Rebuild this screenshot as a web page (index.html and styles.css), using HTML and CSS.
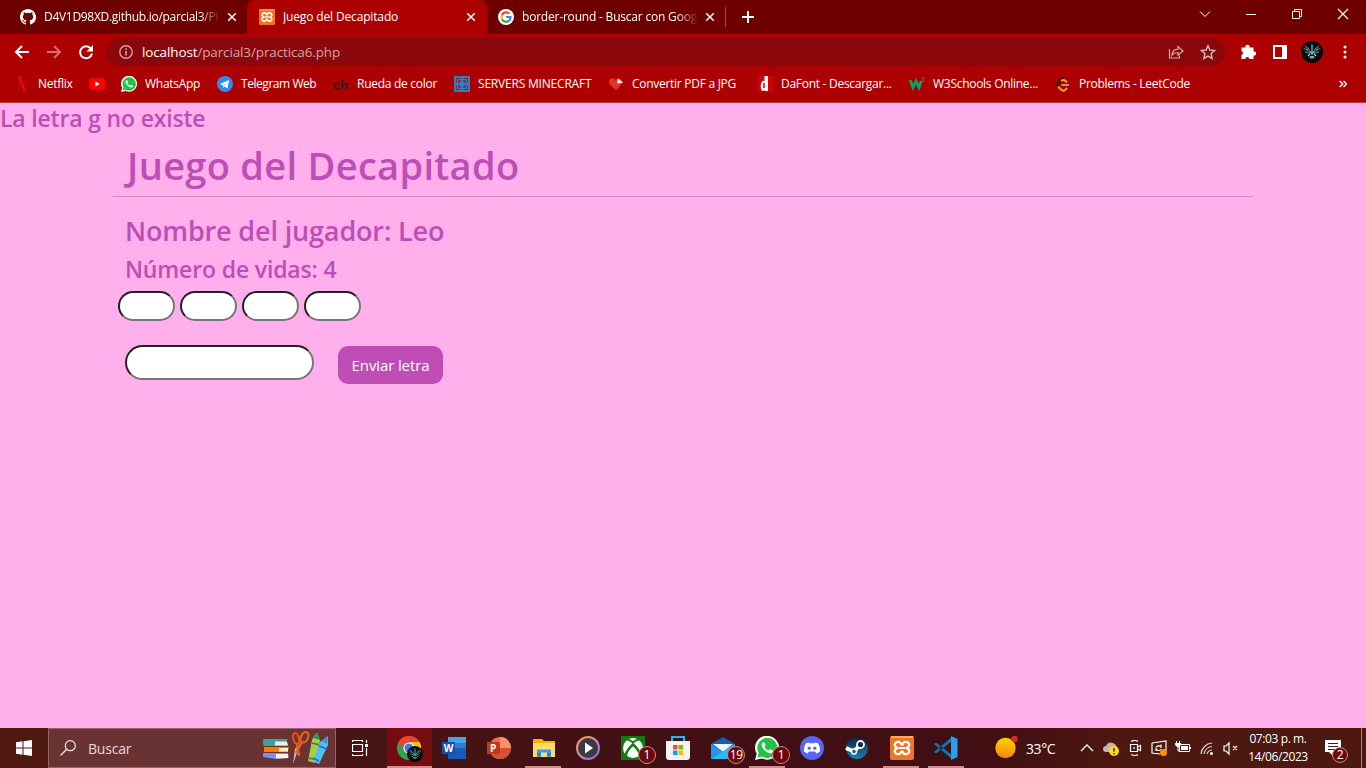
FILE: index.html
```html
<!DOCTYPE html>
<html lang="es">
<head>
<meta charset="utf-8">
<title>Juego del Decapitado</title>
<link rel="stylesheet" href="styles.css">
</head>
<body>
<svg class="defs" width="0" height="0">
  <symbol id="whatsapp" viewBox="0 0 24 24"><path d="M0 24l1.700-6.200A12 12 0 1 1 6.800 22.500z" fill="#fff"/><path d="M2.500 21.500l1.200-4.500A10 10 0 1 1 7.200 20.500z" fill="#25c048"/><path d="M8 6.500c-2 1-1.800 4 1 7s6.500 5 8.600 2.800c.7-.9.5-1.600-.2-2l-2-1c-.8-.3-1 1.200-1.800 1.200-1.200 0-4-2.700-4-3.600 0-.6 1-1 .8-1.800l-.8-2c-.3-.8-1-.8-1.600-.6z" fill="#fff"/></symbol>
  <symbol id="xampp" viewBox="0 0 24 24"><rect width="24" height="24" rx="2" fill="#ee7623"/><rect x="1" y="0" width="22" height="2" fill="#f6a66c"/><path d="M12 8.600c-1.300 0-1.200-2.800-3-2.800h-1.500a3 3 0 0 0-1.300 5.500l1 .7-1 .7a3 3 0 0 0 1.300 5.500H9c1.800 0 1.700-2.800 3-2.800s1.200 2.800 3 2.800h1.500a3 3 0 0 0 1.300-5.500l-1-.7 1-.7a3 3 0 0 0-1.300-5.500H15c-1.800 0-1.700 2.800-3 2.800z" fill="none" stroke="#fff" stroke-width="2.300" stroke-linejoin="round"/><path d="M8.500 12h7" stroke="#fff" stroke-width="2"/></symbol>
  <symbol id="close" viewBox="0 0 10 10"><path d="M1.200 1.200l7.600 7.600M8.800 1.200L1.200 8.800" stroke="#fff" stroke-width="1.500"/></symbol>
  <symbol id="avatar" viewBox="0 0 22 22"><circle cx="11" cy="11" r="11" fill="#080b0d"/><path d="M2.500 7l5 3-3-5 4 4M19.500 7l-5 3 3-5-4 4M4 11l5 1M18 11l-5 1" stroke="#52696b" stroke-width="1.300" fill="none"/><path d="M11 3.500v10M8.500 10l2.500 3 2.500-3" stroke="#46cfc8" stroke-width="1.300" fill="none"/><path d="M7 15l2-2M15 15l-2-2M9 17l1-2M13 17l-1-2M11 18v-3" stroke="#c0cdcd" stroke-width="1.100"/></symbol>
</svg>

<header class="browser">
  <div class="tabstrip">
    <div class="tab tab-first">
      <svg class="i16" viewBox="0 0 16 16"><path fill="#fff" d="M8 0C3.580 0 0 3.580 0 8c0 3.540 2.290 6.530 5.470 7.590.4.070.55-.17.55-.38v-1.490c-2.010.37-2.530-.49-2.690-.94-.09-.23-.48-.94-.82-1.130-.28-.15-.68-.52-.01-.53.63-.01 1.080.58 1.230.82.72 1.210 1.870.87 2.330.66.070-.52.280-.87.510-1.070-1.780-.2-3.640-.89-3.640-3.950 0-.87.310-1.590.82-2.150-.08-.2-.36-1.020.08-2.120 0 0 .67-.21 2.200.82a7.600 7.600 0 0 1 4 0c1.530-1.040 2.200-.82 2.200-.82.44 1.100.16 1.920.08 2.120.51.560.82 1.270.82 2.150 0 3.070-1.870 3.750-3.650 3.950.29.250.54.730.54 1.480v2.200c0 .21.150.46.550.38A8 8 0 0 0 8 0z"/></svg>
      <span class="tab-title title-github">D4V1D98XD.github.io/parcial3/PH</span>
      <svg class="close"><use href="#close"/></svg>
    </div>
    <div class="tab tab-active">
      <svg class="i16"><use href="#xampp"/></svg>
      <span class="tab-title title-game">Juego del Decapitado</span>
      <svg class="close"><use href="#close"/></svg>
    </div>
    <div class="tab tab-google">
      <svg class="i16" viewBox="0 0 16 16"><circle cx="8" cy="8" r="8" fill="#fff"/><g fill="none" stroke-width="2.200"><path d="M11.200 4.500A4.500 4.500 0 0 0 4 6" stroke="#ea4335"/><path d="M4 6a4.500 4.500 0 0 0 0 4.200" stroke="#fbbc05"/><path d="M4 10.200a4.500 4.500 0 0 0 7.200 1.300" stroke="#34a853"/><path d="M8 8h4.500a4.500 4.500 0 0 1-1.300 3.500" stroke="#4285f4"/></g></svg>
      <span class="tab-title title-google">border-round - Buscar con Googl</span>
      <svg class="close"><use href="#close"/></svg>
    </div>
    <span class="tab-divider"></span>
    <svg class="new-tab" viewBox="0 0 12 12"><path d="M6 0v12M0 6h12" stroke="#fff" stroke-width="2"/></svg>
    <div class="window-controls">
      <svg viewBox="0 0 46 28"><path d="M18 11.500l5 5 5-5" fill="none" stroke="#fff"/></svg>
      <svg viewBox="0 0 46 28"><path d="M18 14.500h10" stroke="#fff"/></svg>
      <svg viewBox="0 0 46 28"><path d="M18.500 11.500h7v7h-7zM20.500 11v-1.500h7v7h-1.500" fill="none" stroke="#fff"/></svg>
      <svg viewBox="0 0 46 28"><path d="M18 9l10 10M28 9L18 19" stroke="#fff" stroke-width="1.200"/></svg>
    </div>
  </div>

  <div class="toolbar">
    <svg class="nav" viewBox="0 0 16 16"><path d="M15 8H2M8 2L2 8l6 6" fill="none" stroke="#fff" stroke-width="2"/></svg>
    <svg class="nav" viewBox="0 0 16 16"><path d="M1 8h13M8 2l6 6-6 6" fill="none" stroke="#d86a6a" stroke-width="2"/></svg>
    <svg class="nav" viewBox="0 0 16 16"><path d="M12.800 4.500A6 6 0 1 0 14 9.500" fill="none" stroke="#fff" stroke-width="2"/><path d="M15 1v6.500H8.500z" fill="#fff"/></svg>
    <div class="omnibox">
      <svg class="info" viewBox="0 0 14 14"><circle cx="7" cy="7" r="6.200" fill="none" stroke="#cda5a5" stroke-width="1.400"/><path d="M7 6v4.500M7 3.300v1.600" stroke="#cda5a5" stroke-width="1.500"/></svg>
      <span class="url"><b>localhost</b>/parcial3/practica6.php</span>
      <svg class="i16 share" viewBox="0 0 16 16"><path d="M1.500 5v9h10v-2.500M4 11c.5-4 3-5.800 6-5.800V2.500L15 7l-5 4.300V8.500c-2.500 0-4.500.7-6 2.500z" fill="none" stroke="#ceb0b0" stroke-width="1.200"/></svg>
      <svg class="i16" viewBox="0 0 16 16"><path d="M8 1.800l1.900 4.300 4.700.5-3.500 3.200 1 4.600L8 12l-4.100 2.400 1-4.600L1.400 6.600l4.700-.5z" fill="none" stroke="#d1b6b6" stroke-width="1.500"/></svg>
    </div>
    <svg class="i16 puzzle" viewBox="0 0 16 16"><path fill="#fff" d="M1.500 3.500h4a2.100 2.100 0 1 1 4 0h4v4a2.100 2.100 0 1 1 0 4V15h-4.200a2 2 0 0 0-4 0H1.500v-3.900a2.100 2.100 0 0 0 0-4z"/></svg>
    <svg class="panel" viewBox="0 0 14 14"><path d="M1 1h12v12H1z" fill="none" stroke="#fff" stroke-width="2"/><path d="M9 0h5v14H9z" fill="#fff"/></svg>
    <svg class="avatar"><use href="#avatar"/></svg>
    <svg class="kebab" viewBox="0 0 4 14"><circle cx="2" cy="2" r="1.500" fill="#fff"/><circle cx="2" cy="7" r="1.500" fill="#fff"/><circle cx="2" cy="12" r="1.500" fill="#fff"/></svg>
  </div>

  <nav class="bookmarks">
    <a class="bm-netflix"><svg class="i16" viewBox="0 0 16 16"><path d="M4 0v16l2.500-.5V7M12 0v16l-2.500-.5V8" fill="#b1060f"/><path d="M4 0h3l5 16-2.600-.4z" fill="#e50914"/></svg><span>Netflix</span></a>
    <a><svg class="i16" viewBox="0 0 16 16"><rect y="2.200" width="16" height="11.600" rx="3" fill="#f00"/><path d="M6.400 5.500v5l4.300-2.500z" fill="#fff"/></svg></a>
    <a><svg class="i16"><use href="#whatsapp"/></svg><span>WhatsApp</span></a>
    <a class="bm-telegram"><svg class="i16" viewBox="0 0 16 16"><circle cx="8" cy="8" r="8" fill="#2d8ceb"/><path d="M3 8l9-4-1.500 8.500-3-2L6 12V9.500z" fill="#fff"/><path d="M6 9.500l4.500-3.500-3 4.500" fill="#b9dcf8"/></svg><span>Telegram Web</span></a>
    <a class="bm-wheel"><svg class="i16" viewBox="0 0 16 16"><path d="M7 7.500H3.500Q1.700 7.500 1.700 10T3.500 13H7M9.500 4v9.500M9.500 9q4.500-2.500 4.500 1v3.500" fill="none" stroke="#2b1618" stroke-width="1.400"/></svg><span>Rueda de color</span></a>
    <a class="bm-server"><svg class="i16" viewBox="0 0 16 16"><path fill="#2e7ec5" d="M0 0h16v16H0z"/><path d="M2.500 6.500v-4h4M9.500 2.500h4v4M13.500 9.500v4h-4M6.500 13.500h-4v-4" fill="none" stroke="#921c2b"/><path d="M5 7V5h2M9 5h2v2M11 9v2H9M7 11H5V9" fill="none" stroke="#921c2b" stroke-width="1.500"/></svg><span>SERVERS MINECRAFT</span></a>
    <a class="bm-pdf"><svg class="i16" viewBox="0 0 16 16"><path d="M8 14.500L1.500 8C-1 3 5 0 8 4c2-3 7-1.500 6.500 3z" fill="#e5322d"/><path d="M9.500 2.500L15 6.500l-5.500 1z" fill="#fff"/></svg><span>Convertir PDF a JPG</span></a>
    <a class="bm-dafont"><svg class="i16" viewBox="0 0 16 16"><path fill="#ce0000" d="M0 0h16v16H0z"/><path d="M7.500 0H11v15H8v-1c-3 3-5-1-4-6 .5-3 2-4 3.500-3z" fill="#fff"/><path d="M7 7v5" stroke="#ce0000" stroke-width="1.500"/></svg><span>DaFont - Descargar...</span></a>
    <a class="bm-w3"><svg class="i16" viewBox="0 0 16 16"><path d="M1 4l3 7.500L7 5l3 6.500L12.300 5" fill="none" stroke="#08a36a" stroke-width="2.800"/><path d="M13 2h2l-1 1.500q2 2-1 2" fill="none" stroke="#08a36a"/></svg><span>W3Schools Online...</span></a>
    <a class="bm-leet"><svg class="i16" viewBox="0 0 16 16"><path d="M9 .5L3 7Q1.500 9 3 11" fill="none" stroke="#251010" stroke-width="2"/><path d="M3 10.500l3 3q2 2 4 .5l2-2M6 5q2.500-2 4.500 0l1.500 1.500" fill="none" stroke="#f6a11a" stroke-width="2"/><path d="M6.500 9H14" stroke="#c6b6b6" stroke-width="1.600"/></svg><span>Problems - LeetCode</span></a>
    <svg class="overflow" viewBox="0 0 8 8"><path d="M.7 1l3 3-3 3M4.500 1l3 3-3 3" fill="none" stroke="#fff" stroke-width="1.500"/></svg>
  </nav>
</header>

<main class="page">
  <h4 class="message">La letra g no existe</h4>
  <div class="container">
    <h1>Juego del Decapitado</h1>
    <hr>
    <h3>Nombre del jugador: Leo</h3>
    <h4 class="lives">Número de vidas: 4</h4>
    <div class="letters"><input type="text"><input type="text"><input type="text"><input type="text"></div>
    <form class="guess"><input type="text"><button type="button">Enviar letra</button></form>
  </div>
</main>

<footer class="taskbar">
  <div class="start"><svg class="i16" viewBox="0 0 16 16"><path d="M0 2.200l6.500-.9v6.200H0zM7.500 1.200L16 0v7.500H7.500zM0 8.500h6.500v6.200L0 13.800zM7.500 8.500H16V16l-8.500-1.200z" fill="#fff"/></svg></div>
  <div class="search">
    <svg class="i16" viewBox="0 0 16 16"><circle cx="10.300" cy="5.700" r="5" fill="none" stroke="#f2e4e4" stroke-width="1.200"/><path d="M6.700 9.300L.5 15.500" stroke="#f2e4e4" stroke-width="1.300"/></svg>
    <span>Buscar</span>
    <svg class="supplies" viewBox="0 0 68 36"><path d="M2 10q0-1 2-1h23l-2 3 2 4H4q-2 0-2-2z" fill="#34a69a"/><path d="M14 11.500h12l1 4H14z" fill="#f7eedb"/><path d="M3 17h25l-1 5H3z" fill="#f57c08"/><path d="M18 18h9v3.500h-9z" fill="#fff0d0"/><path d="M2 23h25l1 5-13 1-13-2z" fill="#7b91ec"/><path d="M15 24h12v4l-12 .5z" fill="#faf1df"/><path d="M32 34l2-15 2-3 1 4z" fill="#c5c5c8"/><ellipse cx="35" cy="8.500" rx="2.800" ry="5.500" transform="rotate(-15 35 8)" fill="none" stroke="#e85018" stroke-width="2.200"/><ellipse cx="43.500" cy="7" rx="3.500" ry="5.500" transform="rotate(25 43 7)" fill="none" stroke="#f15c1c" stroke-width="2.200"/><path d="M36 13l2 13M41 12l-6 11" stroke="#ef581b" stroke-width="2.600"/><path d="M51 10l2-4 3-3 2 4 1 4-5 22-7-2z" fill="#a8cd45"/><path d="M52 8l4-5 3 7z" fill="#27984e"/><path d="M51 13l8 2M48 28l7 2" stroke="#397d51" stroke-width="1.800"/><path d="M59 12l4-3 4-3v9l-9 19-6-3z" fill="#4cc3ee"/><path d="M60 11l7-5-1 8z" fill="#5688dc"/><path d="M58 16l8 3M52 28l6 3" stroke="#3861c1" stroke-width="1.800"/></svg>
  </div>
  <div class="taskview"><svg viewBox="0 0 17 16"><path d="M.5 4.500h10v7H.5zM.5 2V.5h10V2M.5 14v1.500h10V14M14.500 0v3M14.500 8v8" fill="none" stroke="#fff" stroke-width="1.200"/><path d="M13 4h3v3h-3z" fill="#fff"/></svg></div>
  <div class="apps">
    <div class="app current"><svg viewBox="0 0 24 24"><circle cx="12" cy="12" r="12" fill="#29a64a"/><path d="M1.600 6A12 12 0 0 1 22.500 6H12l-5 9z" fill="#e84335"/><path d="M22.500 6A12 12 0 0 1 12 24l5-9-5-9z" fill="#fbc116"/><circle cx="12" cy="12" r="5.600" fill="#fff"/><circle cx="12" cy="12" r="4.500" fill="#3b7ded"/></svg><svg class="mini"><use href="#avatar"/></svg></div>
    <div class="app"><svg viewBox="0 0 24 24"><path d="M6 1h18v22H6z" fill="#185abd"/><path d="M6 1h18v6H6z" fill="#41a5ee"/><path d="M6 7h18v5H6z" fill="#2b7cd3"/><path d="M0 6h13v12H0z" fill="#1550aa"/><text x="1.700" y="15.500" font-size="10">W</text></svg></div>
    <div class="app"><svg viewBox="0 0 24 24"><circle cx="13" cy="12" r="11" fill="#ed6c47"/><path d="M13 1a11 11 0 0 1 11 11H13z" fill="#ff8f6b"/><path d="M2 12h22a11 11 0 0 1-22 0z" fill="#d35230"/><path d="M0 6h13v12H0z" fill="#bd3b1d"/><text x="3" y="15.500" font-size="10">P</text></svg></div>
    <div class="app running"><svg viewBox="0 0 24 24"><path d="M1 3h9l2 2h11v16H1z" fill="#f5b400"/><path d="M1 7h22v14H1z" fill="#ffdc68"/><path d="M5 20.500v-7h14v7h-4v-4H9v4z" fill="#3a9ee4"/><path d="M5 17h4v3.500H5zM15 17h4v3.500h-4z" fill="#2f7ecb"/></svg></div>
    <div class="app"><svg viewBox="0 0 24 24"><defs><linearGradient id="ring" x2="1" y2="1"><stop stop-color="#ff9d3d"/><stop offset=".55" stop-color="#c48cc6"/><stop offset="1" stop-color="#815bdb"/></linearGradient></defs><circle cx="12" cy="12" r="11" fill="#3b3b43" stroke="url(#ring)" stroke-width="2"/><path d="M9 6.500v11l8-5.500z" fill="#fff"/></svg></div>
    <div class="app"><svg viewBox="0 0 24 24"><path d="M0 0h24v24H0z" fill="#107c10"/><circle cx="12" cy="12" r="10" fill="#fff"/><path d="M6 3.500q3 .3 6 3 3-2.700 6-3" fill="none" stroke="#107c10" stroke-width="2"/><path d="M4.500 20Q6 13.500 12 8.500 18 13.500 19.500 20" fill="none" stroke="#107c10" stroke-width="2.500"/></svg><i class="badge">1</i></div>
    <div class="app"><svg viewBox="0 0 24 24"><path d="M6 6V1h12v5" fill="none" stroke="#26b6ed" stroke-width="2"/><path d="M0 5h24v16q0 3-3 3H3q-3 0-3-3z" fill="#f3f3f3"/><path d="M7 9h4.500v4.500H7z" fill="#f25022"/><path d="M12.500 9H17v4.500h-4.500z" fill="#7fba00"/><path d="M7 14.500h4.500V19H7z" fill="#00a4ef"/><path d="M12.500 14.500H17V19h-4.500z" fill="#ffb900"/></svg></div>
    <div class="app"><svg viewBox="0 0 24 24"><path d="M0 8l12-7 12 7v15H0z" fill="#0f61b5"/><path d="M2 8h20l-10 8z" fill="#f1f1f1"/><path d="M0 8l12 8L0 23z" fill="#2197e8"/><path d="M24 8L0 23h24z" fill="#33b4f5"/></svg><i class="badge">19</i></div>
    <div class="app running"><svg><use href="#whatsapp"/></svg><i class="badge">1</i></div>
    <div class="app"><svg viewBox="0 0 24 24"><circle cx="12" cy="12" r="12" fill="#5865f2"/><path d="M8 6.500l2 .7h4l2-.7 2.500 1.200q2 4 1.500 8l-3.500 1.800-1.500-2H9l-1.500 2L4 15.700q-.5-4 1.500-8z" fill="#fff"/><circle cx="9.200" cy="12.200" r="1.600" fill="#5865f2"/><circle cx="14.800" cy="12.200" r="1.600" fill="#5865f2"/></svg></div>
    <div class="app"><svg viewBox="0 0 24 24"><defs><linearGradient id="steam" x2="0" y2="1"><stop stop-color="#111d3f"/><stop offset="1" stop-color="#1783b7"/></linearGradient></defs><circle cx="12" cy="12" r="11" fill="url(#steam)"/><path d="M1 12l8 3.500L14 10" fill="none" stroke="#fff" stroke-width="4"/><circle cx="15.500" cy="8.500" r="3.500" fill="#142449" stroke="#fff" stroke-width="1.800"/><circle cx="9" cy="15.500" r="2.500" fill="#21517d" stroke="#fff" stroke-width="1.400"/></svg></div>
    <div class="app running"><svg><use href="#xampp"/></svg></div>
    <div class="app running"><svg viewBox="0 0 24 24"><path d="M0 8l2-1.500L18 19v4zM0 16l2 1.500L18 5V1z" fill="#0879be"/><path d="M17 0l6.500 3v18L17 24z" fill="#26a1ed"/></svg></div>
  </div>
  <div class="weather"><svg viewBox="0 0 24 24"><defs><linearGradient id="sun" x2="0" y2="1"><stop stop-color="#ffd000"/><stop offset="1" stop-color="#f18a0b"/></linearGradient></defs><circle cx="10.500" cy="13" r="10.200" fill="url(#sun)"/><circle cx="19.500" cy="4" r="3.200" fill="#cf2f25"/></svg><span>33°C</span></div>
  <div class="tray">
    <svg viewBox="0 0 16 16"><path d="M2 11l6-6 6 6" fill="none" stroke="#fff" stroke-width="1.300"/></svg>
    <svg viewBox="0 0 16 16"><path d="M3 12a3 3 0 0 1 0-6q2-5 7-3 3 1 4 4v5z" fill="#bcb5b4"/><circle cx="11" cy="11" r="5" fill="#ffda16"/><path d="M11 8v3.500M11 13v1.200" stroke="#111" stroke-width="1.300"/></svg>
    <svg viewBox="0 0 16 16"><path d="M3.500 4.500h7v7h-7zM10.500 7l3-1.500v5l-3-1.500M4 1.500q4-2 7 0M4 14.500q4 2 7 0M7 7v2" fill="none" stroke="#fff" stroke-width="1.200"/></svg>
    <svg viewBox="0 0 16 16"><path d="M1 3l14-2v10M1 3v10l8 1M5 7.500q2-3 5-.5V4.500M10 9q-2 3-5 0v2" fill="none" stroke="#fff" stroke-width="1.200"/><circle cx="12.500" cy="12.500" r="3.500" fill="#ff9300"/></svg>
    <svg viewBox="0 0 16 16"><path d="M4.500 4.500h10v7h-10z" fill="none" stroke="#fff"/><path d="M6 6h7v4H6zM15 7h1v2h-1zM0 3h6v2L4 7H2L0 5zM1 1h1v2H1zM4 1h1v2H4z" fill="#fff"/><path d="M3 7v4h2" fill="none" stroke="#fff"/></svg>
    <svg viewBox="0 0 16 16"><path d="M2 14A12 12 0 0 1 13 3M5 14A9 9 0 0 1 13 6.500M8 14A6 6 0 0 1 13 10" fill="none" stroke="#ded3d1" stroke-width="1.200"/><circle cx="12.500" cy="13.500" r="1.500" fill="#fff"/></svg>
    <svg viewBox="0 0 16 16"><path d="M1 6h2l3-3v11l-3-3H1zM10 6l4 4M14 6l-4 4" fill="none" stroke="#fff" stroke-width="1.200"/></svg>
  </div>
  <div class="clock"><span>07:03 p. m.</span><span>14/06/2023</span></div>
  <div class="notice"><svg viewBox="0 0 16 16"><path d="M0 0h16v12H8v4l-4-4H0z" fill="#fff"/><path d="M3 3.500h10M3 6.500h10M3 9.500h7" stroke="#4b1710"/></svg><i class="badge">2</i></div>
</footer>
</body>
</html>
```
FILE: styles.css
```css
* { box-sizing: border-box; }
body { margin: 0; width: 1366px; height: 768px; overflow: hidden; display: flex; flex-direction: column; font-family: "Open Sans", "Noto Sans", sans-serif; }
svg { display: block; flex: none; }
.defs { position: absolute; }
.i16 { width: 16px; height: 16px; }
.browser { height: 103px; flex: none; background: #ad0000; border-bottom: 1px solid #bf3838; color: #fff; font-size: 12px; }

.tabstrip { height: 34px; display: flex; align-items: center; background: #6f0000; }
.tab { height: 34px; display: flex; align-items: center; flex: none; }
.tab-first { width: 247px; padding-left: 20px; }
.tab-active { width: 240px; padding-left: 12px; background: #ad0000; border-radius: 8px 8px 0 0; }
.tab-google { width: 238px; padding-left: 11px; }
.tab-title { margin: -1px 7px 0 8px; width: 176px; overflow: hidden; white-space: nowrap; }
.title-github, .title-google { mask-image: linear-gradient(90deg, #000 155px, transparent); }
.title-github { letter-spacing: -.3px; }
.title-google { letter-spacing: -.2px; }
.title-game { letter-spacing: -.15px; }
.close { width: 10px; height: 10px; }
.tab-divider { width: 1px; height: 20px; background: #9b4747; }
.new-tab { width: 12px; height: 12px; margin-left: 16px; }
.window-controls { display: flex; margin-left: auto; height: 28px; align-self: flex-start; }
.window-controls svg { width: 46px; height: 28px; }

.toolbar { height: 36px; display: flex; align-items: center; padding-left: 14px; }
.nav { width: 16px; height: 16px; margin-right: 16px; }
.omnibox { width: 1118px; height: 28px; flex: none; margin-left: -3px; border-radius: 14px; background: #8a080b; display: flex; align-items: center; padding: 0 9px 0 12px; }
.info { width: 14px; height: 14px; }
.url { margin-left: 9px; font-size: 13.5px; color: #d5a1a2; letter-spacing: -.13px; }
.url b { color: #fff; font-weight: 400; }
.share { margin: 0 16px 0 auto; }
.puzzle { margin-left: 15px; }
.panel { width: 14px; height: 14px; margin-left: 17px; }
.avatar { width: 22px; height: 22px; margin-left: 14px; }
.kebab { width: 4px; height: 14px; margin-left: 20px; }

.bookmarks { height: 28px; display: grid; grid-template-columns: 75px 32px 96px 116px 121px 154px 149px 152px 146px 284px 10px; padding-left: 14px; align-items: center; }
.bookmarks a { display: flex; align-items: center; gap: 8px; white-space: nowrap; letter-spacing: -.28px; }
.bookmarks a span { margin-top: -1px; }
.bookmarks .bm-telegram { letter-spacing: -.45px; }
.bookmarks .bm-server { letter-spacing: -.2px; }
.overflow { width: 8px; height: 8px; }

.page { height: 625px; flex: none; background: #feafec; color: #bd4eb6; padding-top: 1px; }
h1, h3, h4 { margin: 0 0 8px; font-weight: 600; }
h4 { font-size: 23px; line-height: 29px; letter-spacing: -.18px; }
h3 { font-size: 27px; line-height: 34px; letter-spacing: -.15px; position: relative; top: 1px; }
h1 { font-size: 38px; line-height: 48px; letter-spacing: .3px; margin: 0; }
.container { width: 1140px; margin: 2px auto 0; }
.container h1, .container h3, .container h4 { padding-left: 12px; }
.container h1 { padding-left: 14px; }
.lives { letter-spacing: -.15px; }
hr { height: 1px; border: 0; margin: 7px 0 16px; background: #ce8fc4; }
.letters { display: flex; gap: 5px; padding-left: 5px; margin-top: -1px; }
input { border: 2px inset #767676; background: #fff; padding: 0; }
.letters input { width: 57px; height: 30px; border-radius: 15px; }
.guess { display: flex; gap: 24px; align-items: flex-start; margin: 24px 0 0 12px; }
.guess input { width: 189px; height: 35px; border-radius: 17.5px; }
.guess button { width: 105px; height: 38px; margin-top: 1px; padding: 0; border: 0; border-radius: 10px; background: #be4db6; color: #fff; font: 15px "Open Sans", sans-serif; letter-spacing: -.12px; }

.taskbar { height: 40px; flex: none; display: flex; background: linear-gradient(90deg, #501a10, #471415 28%, #400f14 55%, #420f13 73%, #4d180f 82%, #4d180f); color: #fff; }
.taskbar > div { flex: none; }
.start { width: 48px; display: flex; align-items: center; justify-content: center; }
.search { width: 288px; border: 1px solid #966464; background: #693233; display: flex; align-items: center; padding-left: 11px; font-size: 14px; color: #e8d8d8; letter-spacing: -.2px; }
.search span { margin-left: 12px; }
.supplies { width: 68px; height: 36px; margin: 0 6px 0 auto; }
.taskview { width: 51px; padding: 12px 0 0 16px; }
.taskview svg { width: 17px; height: 16px; }
.apps { display: flex; width: 583px; }
.app { width: 44.750px; flex: none; display: flex; align-items: center; justify-content: center; position: relative; }
.app svg { width: 24px; height: 24px; }
.app text { font-family: "Open Sans", sans-serif; font-weight: 700; fill: #fff; }
.running::after, .current::after { content: ""; position: absolute; bottom: 0; left: 4px; width: 36px; height: 2px; background: #d48b8e; }
.current { background: #760b10; }
.current::after { left: 0; width: 100%; }
.app .mini { position: absolute; width: 16px; height: 16px; left: 20px; top: 18px; }
.badge { position: absolute; left: 27px; top: 18px; width: 18px; height: 18px; border: 1px solid #c48b8b; border-radius: 9px; background: #6e0909; font-size: 12px; line-height: 16px; text-align: center; font-style: normal; letter-spacing: -.4px; }
.weather { width: 108px; padding-left: 25px; display: flex; align-items: center; font-size: 14px; letter-spacing: -.4px; }
.weather svg { width: 24px; height: 24px; margin-top: -2px; }
.weather span { margin-left: 7px; }
.tray { display: flex; align-items: center; width: 164px; gap: 8px; padding-left: 1px; }
.tray svg { width: 16px; height: 16px; }
.clock { width: 72px; display: flex; flex-direction: column; align-items: center; padding-top: 2px; font-size: 12px; line-height: 18px; letter-spacing: -.4px; white-space: nowrap; }
.notice { position: relative; width: 48px; padding: 12px 0 0 11px; border-right: 1px solid #a68382; }
.notice svg { width: 16px; height: 16px; }
.notice .badge { left: 18px; top: 19px; width: 16px; height: 16px; line-height: 14px; }
```
